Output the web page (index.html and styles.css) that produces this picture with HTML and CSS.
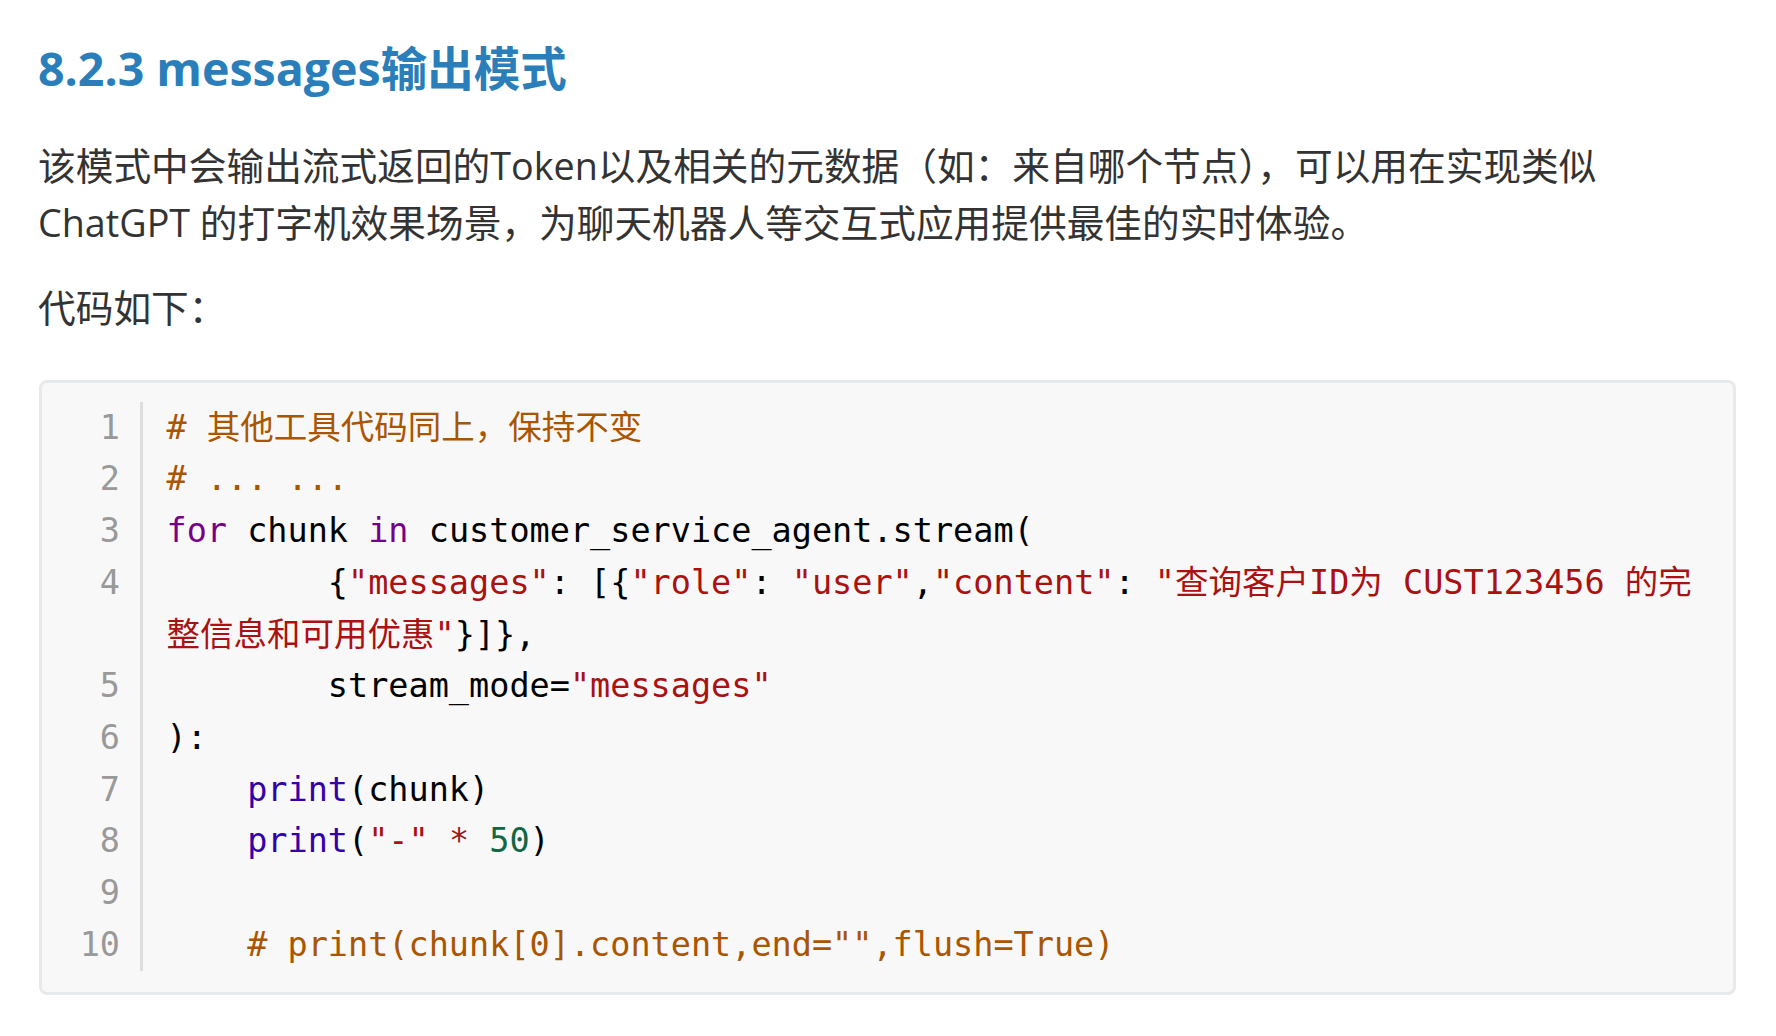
FILE: index.html
```html
<!DOCTYPE html>
<html lang="zh-CN">
<head>
<meta charset="utf-8">
<title>8.2.3 messages输出模式</title>
<link rel="stylesheet" href="styles.css">
</head>
<body>
<main class="doc">
  <h2 class="title">8.2.3 messages输出模式</h2>
  <p class="para">该模式中会输出流式返回的Token以及相关的元数据（如：来自哪个节点），可以用在实现类似 ChatGPT 的打字机效果场景，为聊天机器人等交互式应用提供最佳的实时体验。</p>
  <p class="para para-code-intro">代码如下：</p>
  <div class="code-block">
    <div class="row"><span class="ln">1</span><span class="code"><span class="c-com"># 其他工具代码同上，保持不变</span></span></div>
    <div class="row"><span class="ln">2</span><span class="code"><span class="c-com"># ... ...</span></span></div>
    <div class="row"><span class="ln">3</span><span class="code"><span class="c-kw">for</span> chunk <span class="c-kw">in</span> customer_service_agent.stream(</span></div>
    <div class="row"><span class="ln">4</span><span class="code">        {<span class="c-str">"messages"</span>: [{<span class="c-str">"role"</span>: <span class="c-str">"user"</span>,<span class="c-str">"content"</span>: <span class="c-str">"查询客户ID为 CUST123456 的完整信息和可用优惠"</span>}]},</span></div>
    <div class="row"><span class="ln">5</span><span class="code">        stream_mode=<span class="c-str">"messages"</span></span></div>
    <div class="row"><span class="ln">6</span><span class="code">):</span></div>
    <div class="row"><span class="ln">7</span><span class="code">    <span class="c-bi">print</span>(chunk)</span></div>
    <div class="row"><span class="ln">8</span><span class="code">    <span class="c-bi">print</span>(<span class="c-str">"-"</span> <span class="c-op">*</span> <span class="c-num">50</span>)</span></div>
    <div class="row"><span class="ln">9</span><span class="code"></span></div>
    <div class="row"><span class="ln">10</span><span class="code">    <span class="c-com"># print(chunk[0].content,end="",flush=True)</span></span></div>
  </div>
</main>
</body>
</html>
```

FILE: styles.css
```css
html, body {
  margin: 0;
  padding: 0;
  background: #ffffff;
}

body {
  font-family: "Open Sans", "Noto Sans CJK SC", sans-serif;
  color: #333333;
}

.doc {
  padding: 37px 40px 0 38px;
}

.title {
  margin: 0;
  font-size: 46.5px;
  line-height: 62px;
  font-weight: 700;
  color: #2a7fba;
  font-family: "Open Sans", "Noto Sans CJK SC", sans-serif;
}

.para {
  margin: 39px 0 0 0;
  font-size: 37.7px;
  line-height: 56.6px;
}

.para-code-intro {
  margin-top: 28.4px;
}

.code-block {
  margin-top: 44px;
  margin-left: 0.5px;
  border: 3px solid #e7eaed;
  border-radius: 8px;
  background: #f8f8f8;
  padding: 18.6px 0 21px 0;
  font-family: "DejaVu Sans Mono", "Noto Sans CJK SC", monospace;
  font-size: 33.5px;
  line-height: 51.7px;
  color: #000000;
}

.row {
  display: grid;
  grid-template-columns: 101.5px 1fr;
}

.ln {
  box-sizing: border-box;
  text-align: right;
  padding-right: 20px;
  border-right: 3px solid #dddddd;
  color: #999999;
}

.code {
  white-space: pre-wrap;
  padding-left: 23.5px;
  padding-right: 22px;
  min-width: 0;
}

.c-com { color: #aa5500; }
.c-kw { color: #770088; }
.c-str { color: #aa1111; }
.c-bi { color: #3300aa; }
.c-num { color: #116644; }
.c-op { color: #981a1a; }
```
